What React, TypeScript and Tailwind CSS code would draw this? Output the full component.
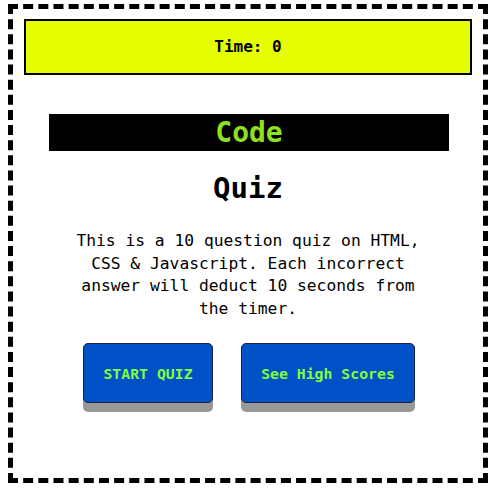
import React from "react";

export default function App() {
  const mono = { fontFamily: '"DejaVu Sans Mono", "Liberation Mono", monospace' };
  return (
    <div className="w-[500px] h-[501px] bg-white pt-1 pl-2" style={mono}>
      <div className="w-[480px] h-[479px] border-[5px] border-dashed border-black bg-white">
        <div className="mx-[11px] mt-[10px] h-[56px] border-2 border-black bg-[#e6ff00] flex items-center justify-center text-[16px] font-bold text-black">
          Time: 0
        </div>
        <div className="ml-[36px] mt-[39px] w-[400px] h-[37px] bg-black flex items-center justify-center text-[28px] font-bold text-[#8fe01f] leading-none">
          Code
        </div>
        <h2 className="mt-[19px] text-center text-[29px] leading-[37px] font-bold text-black">Quiz</h2>
        <p className="mx-auto mt-[23px] w-[360px] text-center text-[16.3px] leading-[22.6px] text-black">
          This is a 10 question quiz on HTML, CSS &amp; Javascript. Each incorrect answer will deduct 10 seconds from the timer.
        </p>
        <div className="mt-[23px] flex justify-center gap-[28px] pl-[2px]">
          <button className="w-[130px] h-[60px] pt-[2px] rounded-[5px] border border-[#1a2440] bg-[#0050c8] text-[14.8px] font-bold text-[#80ff3c] shadow-[0_9px_0_#999999]">
            START QUIZ
          </button>
          <button className="w-[174px] h-[60px] pt-[2px] rounded-[5px] border border-[#1a2440] bg-[#0050c8] text-[14.8px] font-bold text-[#80ff3c] shadow-[0_9px_0_#999999]">
            See High Scores
          </button>
        </div>
      </div>
    </div>
  );
}
